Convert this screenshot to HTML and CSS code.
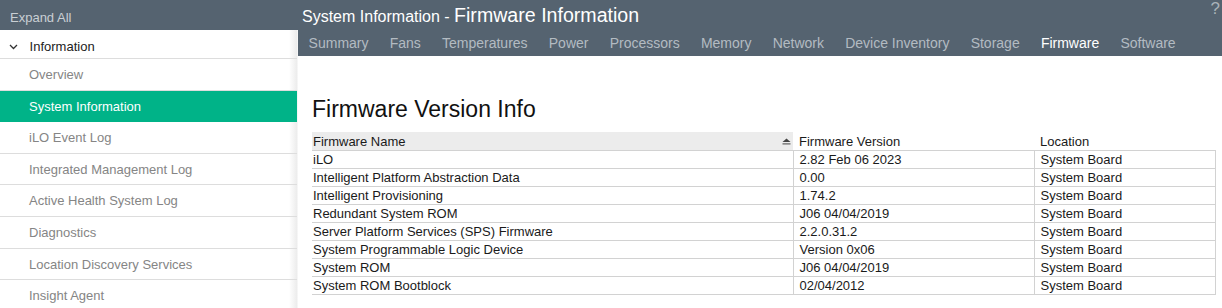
FILE: index.html
```html
<!DOCTYPE html>
<html lang="en">
<head>
    <meta charset="UTF-8">
    <meta name="viewport" content="width=device-width, initial-scale=1.0">
    <title>System Information - Firmware Information</title>
    <link rel="stylesheet" href="styles.css">
</head>
<body>
    <div class="layout">
        <!-- Navigation tree -->
        <aside class="sidebar">
            <div class="expand-bar">Expand All</div>
            <ul class="nav">
                <li class="nav-group">
                    <svg class="chevron" width="9" height="6" viewBox="0 0 9 6"><path d="M1 1l3.5 3.5L8 1" fill="none" stroke="#333" stroke-width="1.3"/></svg>
                    Information
                </li>
                <li class="nav-item">Overview</li>
                <li class="nav-item active">System Information</li>
                <li class="nav-item">iLO Event Log</li>
                <li class="nav-item">Integrated Management Log</li>
                <li class="nav-item">Active Health System Log</li>
                <li class="nav-item">Diagnostics</li>
                <li class="nav-item">Location Discovery Services</li>
                <li class="nav-item">Insight Agent</li>
            </ul>
        </aside>

        <main class="main">
            <header class="page-header">
                <h1 class="page-title">System Information - <span class="page-sub">Firmware Information</span></h1>
                <span class="help">?</span>
                <nav class="tabs">
                    <a class="tab">Summary</a>
                    <a class="tab">Fans</a>
                    <a class="tab">Temperatures</a>
                    <a class="tab">Power</a>
                    <a class="tab">Processors</a>
                    <a class="tab">Memory</a>
                    <a class="tab">Network</a>
                    <a class="tab">Device Inventory</a>
                    <a class="tab">Storage</a>
                    <a class="tab current">Firmware</a>
                    <a class="tab">Software</a>
                </nav>
            </header>

            <section class="content">
                <h2 class="section-title">Firmware Version Info</h2>
                <table class="fw-table">
                    <thead>
                        <tr>
                            <th class="sorted">
                                <div class="th-inner">
                                    <span>Firmware Name</span>
                                    <svg width="9" height="7" viewBox="0 0 9 7"><path d="M0.5 4L4.5 0.5L8.5 4Z" fill="#444"/><rect x="0.5" y="5.4" width="8" height="1" fill="#444"/></svg>
                                </div>
                            </th>
                            <th>Firmware Version</th>
                            <th>Location</th>
                        </tr>
                    </thead>
                    <tbody id="fw-body"></tbody>
                </table>
            </section>
        </main>
    </div>

    <script>
        const firmware = [
            { name: "iLO", version: "2.82 Feb 06 2023", location: "System Board" },
            { name: "Intelligent Platform Abstraction Data", version: "0.00", location: "System Board" },
            { name: "Intelligent Provisioning", version: "1.74.2", location: "System Board" },
            { name: "Redundant System ROM", version: "J06 04/04/2019", location: "System Board" },
            { name: "Server Platform Services (SPS) Firmware", version: "2.2.0.31.2", location: "System Board" },
            { name: "System Programmable Logic Device", version: "Version 0x06", location: "System Board" },
            { name: "System ROM", version: "J06 04/04/2019", location: "System Board" },
            { name: "System ROM Bootblock", version: "02/04/2012", location: "System Board" },
        ];

        const body = document.getElementById('fw-body');
        firmware.forEach(fw => {
            const row = document.createElement('tr');
            row.innerHTML = `<td>${fw.name}</td><td>${fw.version}</td><td>${fw.location}</td>`;
            body.appendChild(row);
        });
    </script>
</body>
</html>
```

FILE: styles.css
```css
body {
    margin: 0;
    padding: 0;
    font-family: "Liberation Sans", Arial, sans-serif;
    background-color: #556370;
    overflow: hidden;
}
.layout {
    display: grid;
    grid-template-columns: 298px 1fr;
    height: 308px;
}

/* Sidebar */
.sidebar {
    display: flex;
    flex-direction: column;
    overflow: hidden;
}
.expand-bar {
    height: 30px;
    line-height: 36px;
    padding-left: 10px;
    font-size: 13px;
    color: #c9cfd4;
    background-color: #556370;
}
.nav {
    list-style: none;
    margin: 0;
    padding: 0;
    flex: 1;
    background: linear-gradient(to right, #fff 0, #fff 289px, #ececec 297px, #fff 298px);
}
.nav-group {
    height: 28px;
    line-height: 33px;
    padding-left: 9px;
    font-size: 13px;
    color: #222;
    border-bottom: 1px solid #ddd;
    margin-right: 1px;
}
.chevron {
    margin-right: 8px;
    vertical-align: 1px;
}
.nav-item {
    height: 30.6px;
    line-height: 32px;
    padding-left: 29px;
    font-size: 13px;
    color: #858585;
    border-bottom: 1px solid #ddd;
    margin-right: 1px;
}
.nav-item.active {
    background-color: #00b388;
    color: #fff;
    border-bottom-color: #00b388;
}

/* Main */
.main {
    display: flex;
    flex-direction: column;
    background-color: #fff;
    min-width: 0;
}
.page-header {
    position: relative;
    height: 56px;
    background-color: #556370;
    padding-left: 4px;
}
.page-title {
    margin: 0;
    height: 30px;
    line-height: 30px;
    font-size: 16px;
    font-weight: normal;
    color: #fff;
    white-space: nowrap;
}
.page-sub {
    font-size: 19.6px;
}
.help {
    position: absolute;
    top: 0;
    right: 2px;
    font-size: 17px;
    line-height: 18px;
    color: #a9b2b9;
}
.tabs {
    display: flex;
    margin-left: -4px;
}
.tab {
    padding: 0 10.6px;
    line-height: 26px;
    font-size: 14px;
    color: #b3bbc2;
    white-space: nowrap;
}
.tab.current {
    color: #fff;
}

.content {
    padding: 0 6px 0 13px;
}
.section-title {
    margin: 40px 0 0 1px;
    height: 36px;
    font-size: 23px;
    font-weight: normal;
    color: #111;
}
.fw-table {
    width: 904px;
    margin-left: 1px;
    border-collapse: collapse;
    font-size: 13px;
    color: #1a1a1a;
}
.fw-table th {
    text-align: left;
    font-weight: normal;
    height: 18px;
    padding: 0 3px 0 6px;
    border-bottom: 1px solid #d2d2d2;
}
.fw-table th:nth-child(1) { width: 478px; }
.fw-table th:nth-child(2) { width: 232px; }
.fw-table th.sorted {
    background-color: #ececec;
}
.th-inner {
    display: flex;
    justify-content: space-between;
    align-items: center;
}
.fw-table td {
    height: 17px;
    padding: 0 3px 0 6px;
    border-bottom: 1px solid #d2d2d2;
    border-right: 1px solid #d2d2d2;
    white-space: nowrap;
}
.fw-table th:first-child,
.fw-table td:first-child {
    padding-left: 1px;
    padding-right: 2px;
}
```
